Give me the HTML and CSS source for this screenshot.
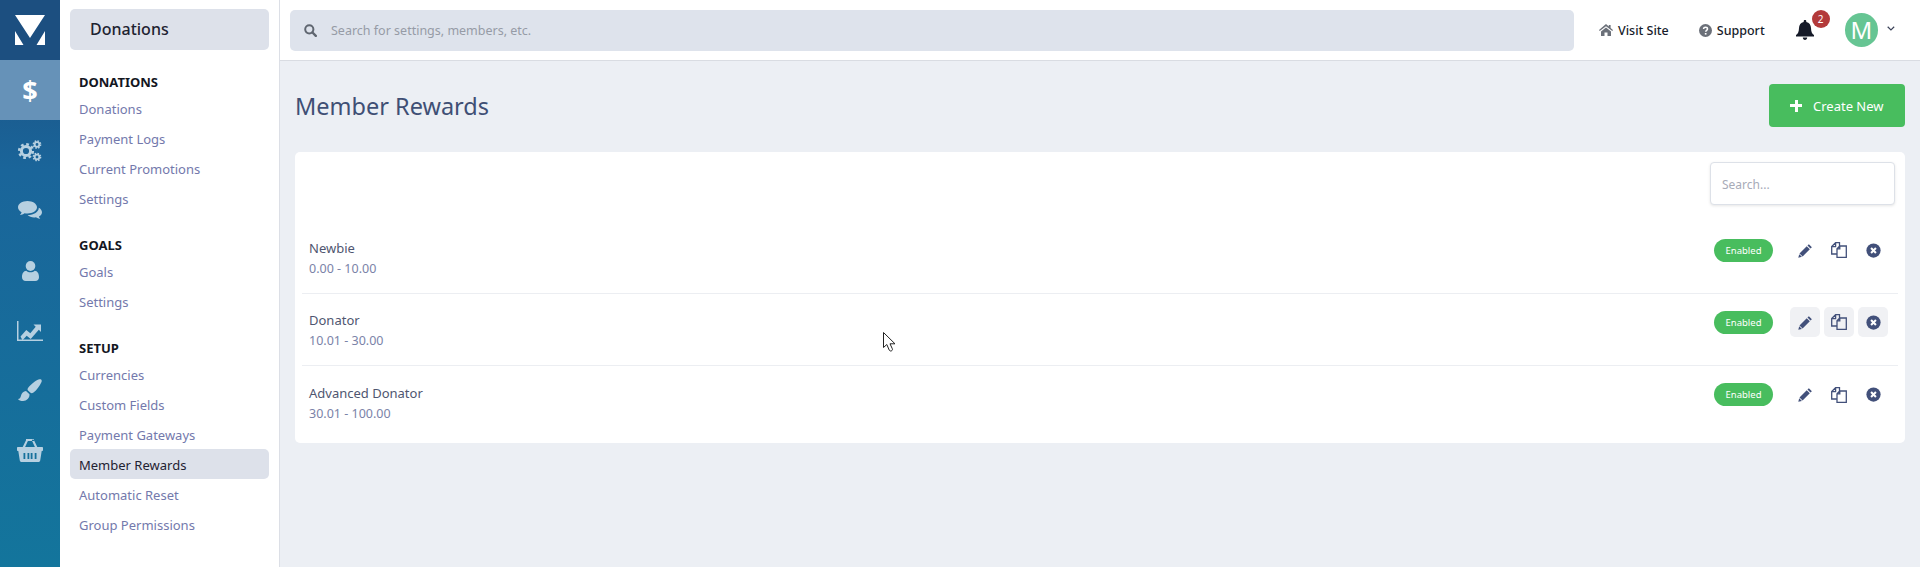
FILE: index.html
```html
<!DOCTYPE html>
<html lang="en">
<head>
    <meta charset="UTF-8">
    <meta name="viewport" content="width=device-width, initial-scale=1.0">
    <title>Member Rewards</title>
    <link rel="stylesheet" href="styles.css">
</head>
<body>

    <svg class="defs" width="0" height="0">
        <symbol id="i-pencil" viewBox="0 0 16 16">
            <path d="M11.600 1.200l3.200 3.200-1.500 1.500-3.200-3.200zM9.300 3.400l3.300 3.300-7.700 7.700-3.300-3.300zM1.300 11.900l2.900 2.900-3.900 1z"/>
        </symbol>
        <symbol id="i-copy" viewBox="0 0 16 16">
            <path class="line" d="M8.500 4V.7H4.600L.7 4.600V12H6M4.600.7v3.900H.7M6 15.300V6.800L8.800 4h6.500v11.300zM8.800 4v2.800H6"/>
        </symbol>
        <symbol id="i-close" viewBox="0 0 16 16">
            <circle cx="8" cy="8" r="7.600"/>
            <path class="cross" d="M5.400 5.400l5.200 5.200M10.600 5.400l-5.200 5.200"/>
        </symbol>
    </svg>

    <div class="rail">
        <a class="rail-logo" href="#">
            <svg width="30" height="30" viewBox="0 0 30 30"><path d="M0 0h30L15 23zM0 16l8.500 14H0zM30 16l-8.500 14H30z"/></svg>
        </a>
        <a class="rail-item active" href="#"><span class="dollar">$</span></a>
        <a class="rail-item" href="#">
            <svg width="24" height="22" viewBox="0 0 24 22">
                <circle class="gear" cx="8" cy="11" r="4.600" stroke-width="3"/>
                <circle class="teeth" cx="8" cy="11" r="6.800" stroke-width="2.600" stroke-dasharray="2.700 2.640"/>
                <circle class="gear" cx="19" cy="4.500" r="2.300" stroke-width="1.800"/>
                <circle class="teeth" cx="19" cy="4.500" r="3.500" stroke-width="1.700" stroke-dasharray="1.500 1.250"/>
                <circle class="gear" cx="19" cy="17" r="2.300" stroke-width="1.800"/>
                <circle class="teeth" cx="19" cy="17" r="3.500" stroke-width="1.700" stroke-dasharray="1.500 1.250"/>
            </svg>
        </a>
        <a class="rail-item" href="#">
            <svg width="24" height="19" viewBox="0 0 24 19">
                <path d="M9.500 0C4.300 0 0 2.800 0 6.300c0 2 1.400 3.800 3.600 5-.3 1-.9 1.900-1.700 2.700 1.700-.2 3.300-.9 4.600-1.800 1 .2 2 .3 3 .3 5.200 0 9.500-2.800 9.500-6.200S14.700 0 9.500 0z"/>
                <path d="M20.800 6.700c.1 4.100-4.800 7.300-11.200 7.400 1.500 1.500 3.900 2.300 6.400 2.300.7 0 1.300 0 1.900-.2 1.300.9 2.800 1.500 4.300 1.800-.5-.8-1.100-1.600-1.300-2.500 1.900-1 3.100-2.500 3.100-4.300 0-1.900-1.300-3.500-3.200-4.500z"/>
            </svg>
        </a>
        <a class="rail-item" href="#">
            <svg width="17" height="20" viewBox="0 0 17 20">
                <ellipse cx="8.500" cy="5" rx="4.800" ry="5"/>
                <path d="M4.300 9.800c1.100 1 2.600 1.500 4.200 1.500s3.100-.5 4.200-1.500c2.800.3 4.300 2.800 4.300 6.400 0 2.300-1.500 3.800-3.700 3.800H3.700C1.500 20 0 18.500 0 16.200c0-3.600 1.500-6.100 4.300-6.400z"/>
            </svg>
        </a>
        <a class="rail-item" href="#">
            <svg width="26" height="20" viewBox="0 0 26 20">
                <path d="M0 0h1.500v18.500H26V20H0z"/>
                <path d="M3.500 15.500l5.800-6.500 4 3.300 5.400-6.500-2.200-2.200H24v7.400l-2.200-2.200-8.100 9.200-4-3.300-4.200 4.600z"/>
            </svg>
        </a>
        <a class="rail-item" href="#">
            <svg width="24" height="23" viewBox="0 0 24 23">
                <path d="M22.800.3c1 .5 1.200 1.700.7 2.800-1.800 3.700-4.700 8.400-8 10.500-1.400.9-2.300.8-3 .2l-2.500-2.400c-.6-.7-.6-1.500 0-2.500C12.300 5.700 17.600 1.700 20.500.5c.9-.4 1.700-.5 2.300-.2z"/>
                <path d="M8 12.100l3.500 3.200c.2 3.900-2.800 6.700-6.400 6.700-2.400 0-4.200-.8-5.100-2.100 1.700 0 2.400-1 2.900-2.900.6-2.700 2.600-4.700 5.100-4.900z"/>
            </svg>
        </a>
        <a class="rail-item" href="#">
            <svg width="26" height="23" viewBox="0 0 26 23">
                <path d="M5.700 8L9 1.200C9.300.6 9.900.4 10.500.7s.7.900.4 1.400L8.100 8zM20.300 8L17 1.200c-.3-.6-.9-.8-1.500-.5s-.7.900-.4 1.400L17.900 8zM9 0h8v2H9z"/>
                <path d="M1 8h24c.6 0 1 .4 1 1v2c0 .6-.4 1-1 1h-.3l-1.500 9.500c-.1.900-.9 1.500-1.700 1.500H4.500c-.8 0-1.600-.6-1.700-1.500L1.300 12H1c-.6 0-1-.4-1-1V9c0-.6.4-1 1-1zm5.500 6v6h1.800v-6zm4 0v6h1.800v-6zm3.200 0v6h1.800v-6zm4 0v6h1.800v-6z" fill-rule="evenodd"/>
            </svg>
        </a>
    </div>

    <div class="sidebar">
        <div class="sidebar-title">Donations</div>

        <div class="nav-group">
            <h4>DONATIONS</h4>
            <a href="#">Donations</a>
            <a href="#">Payment Logs</a>
            <a href="#">Current Promotions</a>
            <a href="#">Settings</a>
        </div>

        <div class="nav-group">
            <h4>GOALS</h4>
            <a href="#">Goals</a>
            <a href="#">Settings</a>
        </div>

        <div class="nav-group">
            <h4>SETUP</h4>
            <a href="#">Currencies</a>
            <a href="#">Custom Fields</a>
            <a href="#">Payment Gateways</a>
            <a href="#" class="current">Member Rewards</a>
            <a href="#">Automatic Reset</a>
            <a href="#">Group Permissions</a>
        </div>
    </div>

    <div class="page">
        <div class="topbar">
            <div class="global-search">
                <svg width="13" height="13" viewBox="0 0 13 13"><circle cx="5.300" cy="5.300" r="4.100" fill="none" stroke="#5f6670" stroke-width="2"/><path d="M8.500 8.500l3.300 3.300" stroke="#5f6670" stroke-width="2.400" stroke-linecap="round"/></svg>
                <span>Search for settings, members, etc.</span>
            </div>
            <a class="top-link visit" href="#">
                <svg width="14" height="12" viewBox="0 0 14 12"><path d="M7 0l2.800 2.400V1h1.800v3l2.400 2.100-.7.800L7 2.300 .7 6.900 0 6.100zM7 3.500l5 3.900V12H8.500V8.500h-3V12H2V7.400z" fill="#6b7079"/></svg>
                Visit Site
            </a>
            <a class="top-link support" href="#">
                <svg width="13" height="13" viewBox="0 0 13 13"><circle cx="6.500" cy="6.500" r="6.500" fill="#6b7079"/><path d="M4.500 5c.1-1.100.9-1.800 2-1.800s2 .7 2 1.700c0 1.400-1.800 1.400-1.800 2.800" fill="none" stroke="#fff" stroke-width="1.500"/><path d="M5.800 9h1.700v1.600H5.800z" fill="#fff"/></svg>
                Support
            </a>
            <div class="bell">
                <svg width="20" height="20" viewBox="0 0 20 20"><path d="M10 0c.8 0 1.300.5 1.300 1.300v.6c3 .6 4.600 3 4.700 6 .1 3.700 1 5.700 3 7.100v1.500H1V15c2-1.400 2.900-3.400 3-7.100.1-3 1.700-5.400 4.700-6v-.6C8.700.5 9.200 0 10 0zM7.800 17.500h4.400c0 1.400-1 2.500-2.200 2.500s-2.200-1.100-2.200-2.500z" fill="#151a28"/></svg>
                <span class="bell-count">2</span>
            </div>
            <div class="avatar">M</div>
            <svg class="caret" width="8" height="5" viewBox="0 0 8 5"><path d="M.7.7L4 4l3.300-3.300" fill="none" stroke="#3b4258" stroke-width="1.200"/></svg>
        </div>

        <div class="content">
            <div class="content-head">
                <h1>Member Rewards</h1>
                <a class="btn-create" href="#"><span class="plus"></span>Create New</a>
            </div>

            <div class="card">
                <div class="card-tools">
                    <div class="table-search">Search...</div>
                </div>

                <div class="reward">
                    <div class="reward-info">
                        <div class="reward-name">Newbie</div>
                        <div class="reward-range">0.00 - 10.00</div>
                    </div>
                    <span class="status">Enabled</span>
                    <div class="actions">
                        <a href="#"><svg width="15" height="15"><use href="#i-pencil"/></svg></a>
                        <a href="#"><svg width="16" height="16"><use href="#i-copy"/></svg></a>
                        <a href="#"><svg width="15" height="15"><use href="#i-close"/></svg></a>
                    </div>
                </div>

                <div class="reward hovered">
                    <div class="reward-info">
                        <div class="reward-name">Donator</div>
                        <div class="reward-range">10.01 - 30.00</div>
                    </div>
                    <span class="status">Enabled</span>
                    <div class="actions">
                        <a href="#"><svg width="15" height="15"><use href="#i-pencil"/></svg></a>
                        <a href="#"><svg width="16" height="16"><use href="#i-copy"/></svg></a>
                        <a href="#"><svg width="15" height="15"><use href="#i-close"/></svg></a>
                    </div>
                </div>

                <div class="reward">
                    <div class="reward-info">
                        <div class="reward-name">Advanced Donator</div>
                        <div class="reward-range">30.01 - 100.00</div>
                    </div>
                    <span class="status">Enabled</span>
                    <div class="actions">
                        <a href="#"><svg width="15" height="15"><use href="#i-pencil"/></svg></a>
                        <a href="#"><svg width="16" height="16"><use href="#i-copy"/></svg></a>
                        <a href="#"><svg width="15" height="15"><use href="#i-close"/></svg></a>
                    </div>
                </div>
            </div>
        </div>
    </div>

    <!-- mouse pointer from the capture -->
    <svg class="pointer" width="13" height="20" viewBox="0 0 13 20"><path d="M.5.500v15l3.300-3 2.400 5.500c.5 1 1.400 1.200 2.300.8s1.200-1.200.8-2.100L7 11.800h5z" fill="#fff" stroke="#222" stroke-width="1"/></svg>

</body>
</html>
```

FILE: styles.css
```css
* {
    box-sizing: border-box;
}
html, body {
    height: 100%;
}
body {
    margin: 0;
    display: flex;
    min-height: 567px;
    overflow: hidden;
    font-family: "Noto Sans", "Open Sans", sans-serif;
    font-size: 13px;
    color: #3f4a6b;
    background-color: #eceff4;
}
a {
    text-decoration: none;
}
.defs {
    position: absolute;
}

/* icon rail */
.rail {
    width: 60px;
    flex-shrink: 0;
    background: linear-gradient(180deg, #1c4f80 0%, #1a659a 30%, #13759c 100%);
}
.rail-logo, .rail-item {
    display: flex;
    align-items: center;
    justify-content: center;
    height: 60px;
}
.rail-logo {
    background-color: #1c4f80;
}
.rail-logo svg {
    fill: #fff;
}
.rail-item svg {
    fill: #b6d0e1;
    margin-top: 1px;
}
.rail-item.active {
    background-color: #6692b8;
}
.dollar {
    font-size: 27px;
    font-weight: 700;
    color: #fff;
    line-height: 1;
}
.gear {
    fill: none;
    stroke: #b6d0e1;
}
.teeth {
    fill: none;
    stroke: #b6d0e1;
}

/* section sidebar */
.sidebar {
    width: 220px;
    flex-shrink: 0;
    padding: 9px 10px 0;
    background-color: #fff;
    border-right: 1px solid #dcdfe6;
}
.sidebar-title {
    height: 41px;
    padding-left: 20px;
    line-height: 41px;
    font-size: 16px;
    font-weight: 500;
    color: #1e2331;
    background-color: #dde1ea;
    border-radius: 5px;
}
.nav-group {
    margin-bottom: 19px;
}
.sidebar-title + .nav-group {
    margin-top: 20px;
}
.nav-group h4 {
    margin: 0;
    padding-left: 9px;
    height: 24px;
    line-height: 24px;
    font-size: 13px;
    font-weight: 700;
    color: #14171f;
}
.nav-group a {
    display: block;
    height: 30px;
    line-height: 30px;
    padding-left: 9px;
    color: #7379ac;
    border-radius: 5px;
}
.nav-group a.current {
    margin: -1px 0 1px;
    line-height: 32px;
    color: #1f2232;
    background-color: #dde1ea;
}

/* top bar */
.page {
    flex: 1;
    min-width: 0;
}
.topbar {
    display: flex;
    align-items: center;
    height: 61px;
    padding: 0 25px 0 10px;
    background-color: #fff;
    border-bottom: 1px solid #d9dce2;
}
.global-search {
    display: flex;
    align-items: center;
    gap: 14px;
    flex-shrink: 0;
    width: 1284px;
    height: 41px;
    padding-left: 14px;
    font-size: 12.500px;
    color: #969ba6;
    background-color: #dee3ec;
    border-radius: 5px;
}
.top-link {
    display: flex;
    align-items: center;
    gap: 5px;
    white-space: nowrap;
    font-size: 12.500px;
    font-weight: 500;
    color: #171c2b;
}
.visit {
    margin-left: 25px;
}
.support {
    margin-left: 30px;
}
.bell {
    position: relative;
    height: 20px;
    margin-left: 30px;
}
.bell-count {
    position: absolute;
    top: -10px;
    left: 17px;
    width: 18px;
    height: 18px;
    line-height: 18px;
    text-align: center;
    font-size: 10px;
    color: #fff;
    background-color: #b33a3a;
    border-radius: 50%;
}
.avatar {
    width: 34px;
    height: 34px;
    margin-left: 30px;
    line-height: 34px;
    text-align: center;
    font-size: 24px;
    color: #fff;
    background-color: #66c593;
    border-radius: 50%;
}
.caret {
    margin-left: 9px;
    margin-bottom: 4px;
}

/* main content */
.content {
    padding: 23px 15px 0 15px;
}
.content-head {
    display: flex;
    align-items: center;
    justify-content: space-between;
    height: 43px;
    margin-bottom: 25px;
}
.content-head h1 {
    margin: 1px 0 0;
    font-size: 23.500px;
    font-weight: 400;
    color: #3f4f75;
}
.btn-create {
    display: flex;
    align-items: center;
    width: 136px;
    height: 43px;
    padding-left: 21px;
    color: #fff;
    background-color: #48bd5e;
    border-radius: 4px;
}
.plus {
    width: 12px;
    height: 12px;
    margin-right: 11px;
    background: linear-gradient(#fff, #fff) center / 12px 3px no-repeat,
                linear-gradient(#fff, #fff) center / 3px 12px no-repeat;
}
.card {
    height: 291px;
    padding: 10px 7px 0;
    background-color: #fff;
    border-radius: 5px;
}
.card-tools {
    display: flex;
    justify-content: flex-end;
    padding-right: 3px;
    margin-bottom: 17px;
}
.table-search {
    width: 185px;
    height: 43px;
    padding-left: 11px;
    line-height: 43px;
    font-size: 12px;
    color: #a7abb8;
    background-color: #fff;
    border: 1px solid #dde1e8;
    border-radius: 4px;
    box-shadow: 0 1px 3px rgba(0,0,0,0.1);
}
.reward {
    display: flex;
    align-items: center;
    height: 72px;
    padding: 0 10px 0 7px;
    border-bottom: 1px solid #eceef2;
}
.reward:last-child {
    border-bottom: 0;
}
.reward-info {
    flex: 1;
    margin-top: 2px;
}
.reward-name {
    line-height: 20px;
    color: #4f5670;
}
.reward-range {
    line-height: 21px;
    font-size: 12.500px;
    color: #7b83a8;
}
.status {
    width: 59px;
    height: 23px;
    margin-bottom: 15px;
    line-height: 23px;
    text-align: center;
    font-size: 9.500px;
    color: #fff;
    background-color: #48bd5e;
    border-radius: 12px;
}
.actions {
    display: flex;
    gap: 4px;
    margin-left: 17px;
    margin-bottom: 15px;
}
.actions a {
    display: flex;
    align-items: center;
    justify-content: center;
    width: 30px;
    height: 30px;
    border-radius: 5px;
}
.actions svg {
    fill: #42507a;
}
.line {
    fill: none;
    stroke: #42507a;
    stroke-width: 1.300;
}
.cross {
    fill: none;
    stroke: #fff;
    stroke-width: 2.200;
}
.hovered .actions a {
    background-color: #f0f1f4;
}
.pointer {
    position: absolute;
    left: 883px;
    top: 332px;
}
```
